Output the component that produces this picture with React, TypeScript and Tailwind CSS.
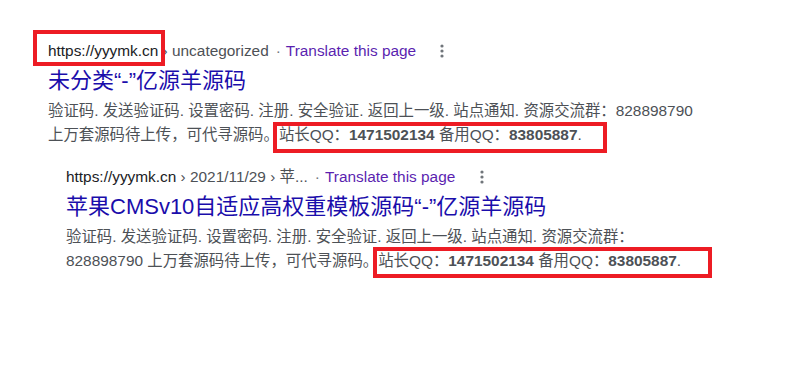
import React from "react";

const font = '"Liberation Sans", Arial, "Noto Sans CJK SC", sans-serif';

function Dots() {
  return (
    <svg width="4" height="14" viewBox="0 0 4 14" className="block">
      <circle cx="2" cy="2" r="1.6" fill="#70757a" />
      <circle cx="2" cy="7" r="1.6" fill="#70757a" />
      <circle cx="2" cy="12" r="1.6" fill="#70757a" />
    </svg>
  );
}

export default function App() {
  return (
    <div className="w-[799px] h-[383px] bg-white overflow-hidden" style={{ fontFamily: font }}>
      <div className="pt-[40px] pl-[48px]">
        {/* Result 1 */}
        <div className="flex items-center h-[22px] text-[15.4px] leading-[22px] whitespace-nowrap">
          <span className="relative text-[#202124]">
            https://yyymk.cn
            <span className="absolute -left-[15px] -right-[7px] -top-[10px] -bottom-[4px] border-4 border-[#ed1c24]" />
          </span>
          <span className="text-[#4d5156]">&nbsp;› uncategorized</span>
          <span className="text-[#70757a] ml-[7px] mr-[5px]">·</span>
          <span className="text-[#5b1fb0]">Translate this page</span>
          <span className="ml-[24px]"><Dots /></span>
        </div>
        <div className="mt-[5px] text-[22px] leading-[28px] text-[#1a0dab] whitespace-nowrap">
          未分类“-”亿源羊源码
        </div>
        <div className="mt-[4px] text-[15.4px] leading-[24px] text-[#4d5156] whitespace-nowrap">
          <div>验证码. 发送验证码. 设置密码. 注册. 安全验证. 返回上一级. 站点通知. 资源交流群：828898790</div>
          <div>
            上万套源码待上传，可代寻源码。
            <span className="relative inline-block">
              站长QQ：<b>1471502134</b> 备用QQ：<b>83805887</b>.
              <span className="absolute -left-[6px] -right-[25px] -top-[1px] -bottom-[6px] border-4 border-[#ed1c24]" />
            </span>
          </div>
        </div>

        {/* Result 2 */}
        <div className="pl-[18px] mt-[19px]">
          <div className="flex items-center h-[22px] text-[15.4px] leading-[22px] whitespace-nowrap">
            <span className="text-[#202124]">https://yyymk.cn</span>
            <span className="text-[#4d5156]">&nbsp;› 2021/11/29 › 苹...</span>
            <span className="text-[#70757a] ml-[7px] mr-[5px]">·</span>
            <span className="text-[#5b1fb0]">Translate this page</span>
            <span className="ml-[25px]"><Dots /></span>
          </div>
          <div className="mt-[5px] text-[22px] leading-[28px] text-[#1a0dab] whitespace-nowrap">
            苹果CMSv10自适应高权重模板源码“-”亿源羊源码
          </div>
          <div className="mt-[4px] text-[15.4px] leading-[24px] text-[#4d5156] whitespace-nowrap">
            <div>验证码. 发送验证码. 设置密码. 注册. 安全验证. 返回上一级. 站点通知. 资源交流群：</div>
            <div>
              828898790 上万套源码待上传，可代寻源码。
              <span className="relative inline-block">
                站长QQ：<b>1471502134</b> 备用QQ：<b>83805887</b>.
                <span className="absolute -left-[5px] -right-[31px] -top-[2px] -bottom-[5px] border-4 border-[#ed1c24]" />
              </span>
            </div>
          </div>
        </div>
      </div>
    </div>
  );
}
